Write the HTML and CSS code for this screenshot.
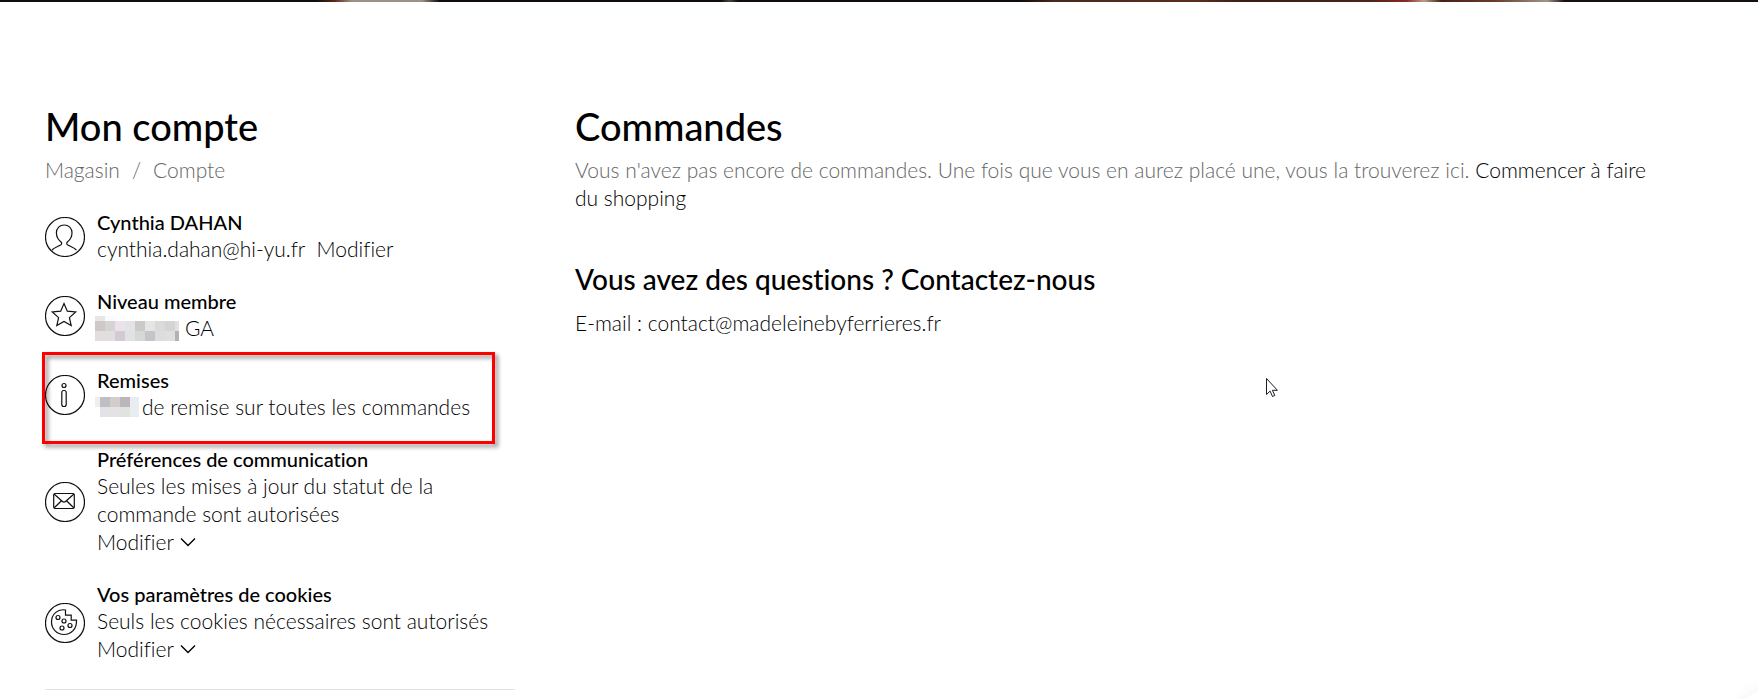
FILE: index.html
```
<!DOCTYPE html>
<html lang="fr">
<head>
	<meta charset="utf-8" />
	<title>Mon compte</title>
	<link rel="stylesheet" href="styles.css">
</head>
<body>
	<div class="banner"></div>

	<main class="page">
		<aside class="account">
			<h1>Mon compte</h1>
			<nav class="breadcrumbs"><a href="#">Magasin</a><span>/</span><a href="#">Compte</a></nav>

			<section class="item">
				<svg class="icon" viewBox="0 0 40 40">
					<circle cx="20" cy="20" r="19.5"/>
					<path d="M7 33c2-2.200 6-3.400 9-5.200 1-.8.8-2 0-2.800-3-2.500-4.600-5.500-4.600-9C11.400 11 14.800 8 19.200 8S27 11 27 16c0 3.500-1.600 6.500-4.600 9-.8.8-1 2 0 2.800 3 1.800 7 3 9 5.200"/>
				</svg>
				<div class="text">
					<h3>Cynthia DAHAN</h3>
					<p>cynthia.dahan@hi-yu.fr <a class="edit" href="#">Modifier</a></p>
				</div>
			</section>

			<section class="item">
				<svg class="icon" viewBox="0 0 40 40">
					<circle cx="20" cy="20" r="19.5"/>
					<path d="M19 7.500l3.300 7.700 8.400.8-6.300 5.600 1.800 8-7.200-4.200-7.200 4.200 1.800-8L7.300 16l8.400-.8z"/>
				</svg>
				<div class="text">
					<h3>Niveau membre</h3>
					<p class="masked">
						<svg class="mosaic level" viewBox="0 0 84 25">
							<path fill="#e9e6e6" d="M0 0h10v5H0z"/><path fill="#f9fbfe" d="M10 0h10v5H10z"/>
							<path fill="#d0c8c8" d="M0 5h10v10H0z"/><path fill="#d6d3d4" d="M10 5h10v10H10z"/>
							<path fill="#e8e4e9" d="M20 5h10v10H20z"/><path fill="#e3e2e6" d="M30 5h10v10H30z"/>
							<path fill="#cccac8" d="M40 5h10v10H40z"/><path fill="#e5e5e6" d="M50 5h10v10H50z"/>
							<path fill="#dadbd9" d="M60 5h10v10H60z"/><path fill="#d4d4d4" d="M70 5h10v10H70z"/>
							<path fill="#e1e0e1" d="M80 5h4v10h-4z"/>
							<path fill="#e2dede" d="M0 15h20v10H0z"/><path fill="#d3cbd3" d="M20 15h10v10H20z"/>
							<path fill="#e0e3e3" d="M30 15h10v10H30z"/><path fill="#d6d8d6" d="M40 15h10v10H40z"/>
							<path fill="#c4c5ca" d="M50 15h10v10H50z"/><path fill="#dcdedc" d="M60 15h10v10H60z"/>
							<path fill="#e0dede" d="M70 15h10v10H70z"/><path fill="#b8b0ae" d="M80 15h4v10h-4z"/>
						</svg>
						GA
					</p>
				</div>
			</section>

			<section class="item highlighted">
				<svg class="icon" viewBox="0 0 40 40">
					<circle cx="20" cy="20" r="19.5"/>
					<circle cx="19" cy="10.500" r="2"/>
					<rect x="16.800" y="15.500" width="4.400" height="16" rx="2"/>
				</svg>
				<div class="text">
					<h3>Remises</h3>
					<p class="masked">
						<svg class="mosaic discount" viewBox="0 0 44 20">
							<path fill="#f1efee" d="M0 0h5v10H0z"/><path fill="#c0bec5" d="M5 0h10v10H5z"/>
							<path fill="#d3cccb" d="M15 0h10v10H15z"/><path fill="#b9b7bc" d="M25 0h10v10H25z"/>
							<path fill="#e8edf1" d="M35 0h9v20h-9z"/>
							<path fill="#e3e3e6" d="M5 10h20v10H5z"/><path fill="#e1e3e0" d="M25 10h10v10H25z"/>
						</svg>
						de remise sur toutes les commandes
					</p>
				</div>
			</section>

			<section class="item">
				<svg class="icon" viewBox="0 0 40 40">
					<circle cx="20" cy="20" r="19.5"/>
					<rect x="8.700" y="11.500" width="20.600" height="15" rx="1.500"/>
					<path d="M9 12l8.200 7.300c1 .9 2.600.9 3.600 0L29 12M9 26l7.500-7.200M29 26l-7.500-7.200"/>
				</svg>
				<div class="text">
					<h3>Préférences de communication</h3>
					<p>Seules les mises à jour du statut de la commande sont autorisées</p>
					<button type="button">Modifier
						<svg class="chevron" viewBox="0 0 16 10"><path d="M1 1.500l7 7 7-7"/></svg>
					</button>
				</div>
			</section>

			<section class="item">
				<svg class="icon" viewBox="0 0 40 40">
					<circle cx="20" cy="20" r="19.5"/>
					<path d="M20.500 7C12.500 5.500 6.500 11.500 6.500 19c0 7 5.500 12.500 12.500 12.500S32 26 31.500 17.200h-5.300v-5h-5.700z"/>
					<circle cx="13" cy="14.500" r="2"/>
					<circle cx="19" cy="18" r="2"/>
					<circle cx="25" cy="22.500" r="2"/>
					<circle cx="17" cy="25" r="2"/>
				</svg>
				<div class="text">
					<h3>Vos paramètres de cookies</h3>
					<p>Seuls les cookies nécessaires sont autorisés</p>
					<button type="button">Modifier
						<svg class="chevron" viewBox="0 0 16 10"><path d="M1 1.500l7 7 7-7"/></svg>
					</button>
				</div>
			</section>
		</aside>

		<div class="content">
			<section class="orders">
				<h1>Commandes</h1>
				<p>Vous n'avez pas encore de commandes. Une fois que vous en aurez placé une, vous la trouverez ici. <a href="#">Commencer à faire du shopping</a></p>
			</section>
			<section class="contact">
				<h2>Vous avez des questions ? Contactez-nous</h2>
				<p>E-mail : <a href="mailto:contact@madeleinebyferrieres.fr">contact@madeleinebyferrieres.fr</a></p>
			</section>
		</div>
	</main>

	<div class="bubble"></div>
	<svg class="cursor" viewBox="0 0 12 19">
		<path d="M.5.5v16l3.600-3.400 2.400 5.400 2.300-1-2.400-5.200h5z"/>
	</svg>
</body>
</html>
```

FILE: styles.css
```
* { box-sizing:border-box; margin:0; padding:0; }
body { background:#fff; color:#000; font:300 21px/28px Lato, "Open Sans", sans-serif; font-variant-ligatures:none; }
a { color:inherit; text-decoration:none; }

.banner {
	height:2px;
	background:linear-gradient(90deg, #120e0e 0 18%, #5a2412 19%, #9a9385 20% 24%, #120c0c 25% 41%, #4a433c 41.500%, #120c0c 42% 58%, #4c271d 60%, #5a2c20 68%, #3c1c15 71%, #4e241a 78%, #8a2a22 80%, #b8a088 81%, #4a1e18 82%, #6a3a2c 85%, #a09688 88%, #17100f 89%);
}

.page { display:grid; grid-template-columns:470px 1fr; column-gap:60px; padding:99px 45px 0; }

h1 { font-size:38px; line-height:50px; font-weight:500; margin-bottom:5px; }
h2 { font-size:28px; line-height:36px; font-weight:500; margin-bottom:12px; }
h3 { font-size:20px; line-height:26px; font-weight:500; }

.account { border-bottom:1px solid #e3e3e3; padding-bottom:25px; }
.breadcrumbs { display:flex; gap:12px; color:#666; margin-bottom:25px; }

.item { position:relative; display:flex; align-items:center; gap:12px; }
.item + .item { margin-top:24px; }
.icon { flex:none; width:40px; height:40px; fill:none; stroke:#111; stroke-width:1.2; }
.text { flex:1; padding-bottom:1px; }
.edit { margin-left:6px; }

.masked { display:flex; align-items:center; gap:3px; }
.mosaic { flex:none; margin-left:-2px; shape-rendering:crispEdges; }
.level { width:84px; height:25px; margin-right:3px; }
.discount { width:44px; height:20px; }

.highlighted:after {
	content:"";
	position:absolute;
	top:-15px;
	right:20px;
	bottom:-22px;
	left:-3px;
	border:3px solid #f00;
	filter:drop-shadow(3px 3px 2px rgba(0,0,0,.45));
}

button { display:flex; align-items:center; gap:6px; border:0; background:none; color:inherit; font:inherit; cursor:pointer; }
.chevron { width:16px; height:10px; fill:none; stroke:#000; stroke-width:1.4; }

.orders { max-width:1080px; margin-bottom:49px; color:#666; }
.orders h1, .orders a { color:#000; }

/* chat bubble, only its edge shows in the corner */
.bubble {
	position:fixed;
	right:-52px;
	bottom:-71px;
	width:80px;
	height:80px;
	border-radius:50%;
	background:#fff;
	box-shadow:0 0 16px rgba(0,0,0,.06);
}
.cursor { position:absolute; top:378px; left:1266px; width:12px; height:19px; fill:#fff; stroke:#1a1a2a; stroke-width:1; }
```
